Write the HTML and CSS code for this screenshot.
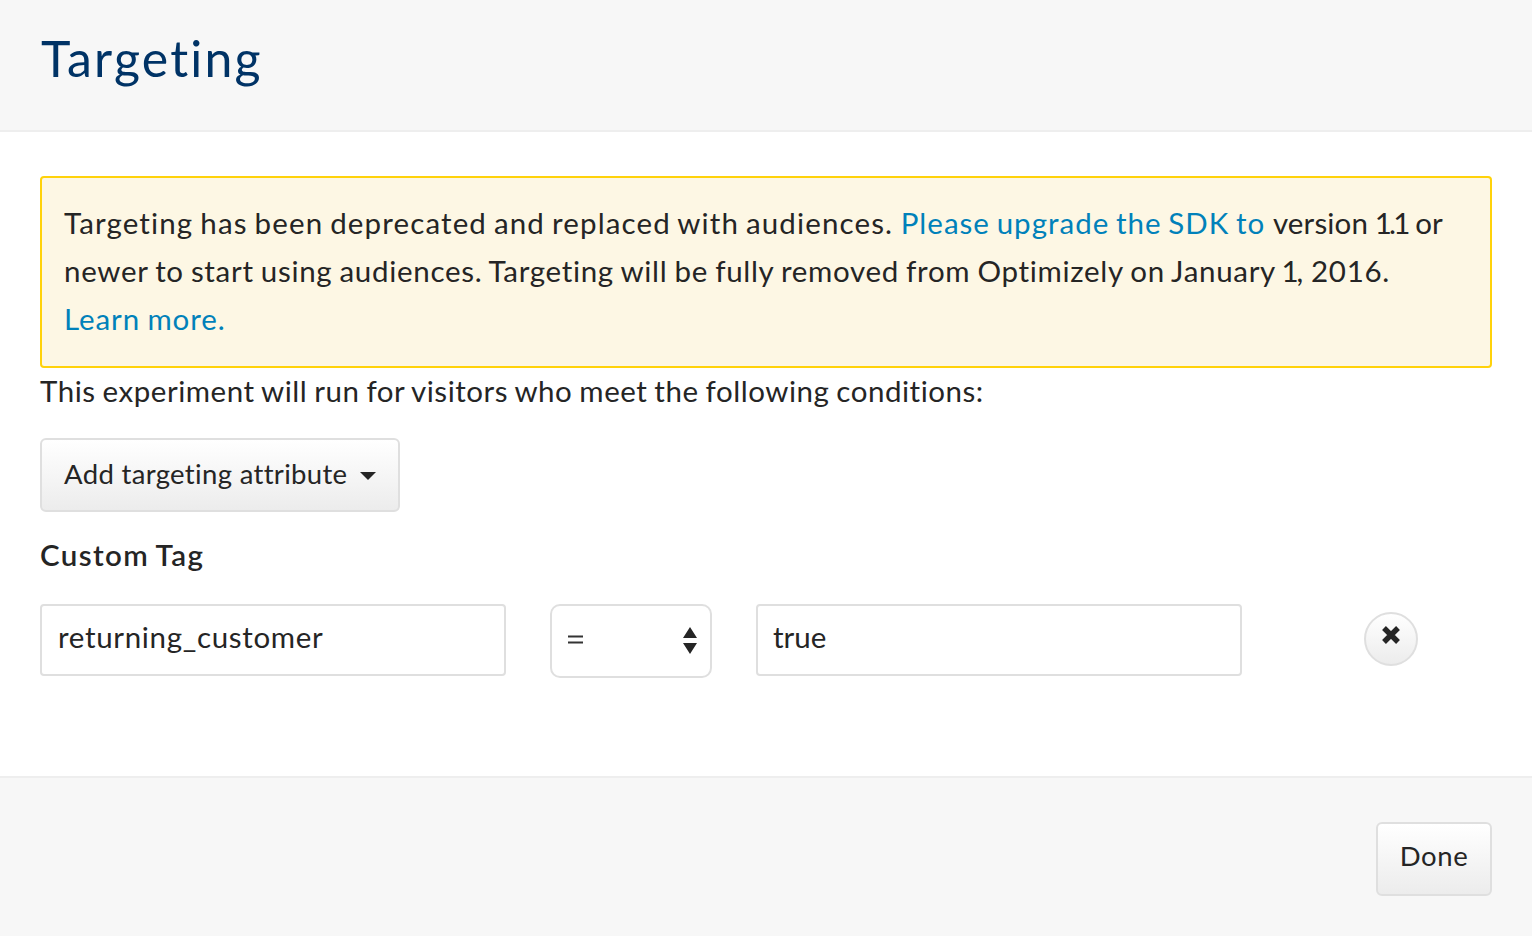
FILE: index.html
```html
<!DOCTYPE html>
<html lang="en">
<head>
<meta charset="utf-8">
<title>Targeting</title>
<link rel="stylesheet" href="styles.css">
</head>
<body>
<div class="dialog">
  <header class="dialog-header"><h1 class="title">Targeting</h1></header>
  <main class="dialog-body">
    <div class="notice">
      <div><span class="notice-lead">Targeting has been deprecated and replaced with audiences.</span> <a class="link link-sdk">Please upgrade the SDK to</a> <span class="notice-version">version <span class="number">1.1</span> or</span></div>
      <div class="notice-detail">newer to start using audiences. Targeting will be fully removed from Optimizely on January <span class="day">1</span>, 2016.</div>
      <div><a class="link link-more">Learn more.</a></div>
    </div>
    <p class="intro">This experiment will run for visitors who meet the following conditions:</p>
    <button class="btn btn-add"><span>Add targeting attribute</span><svg class="caret" width="16" height="8" viewBox="0 0 16 8"><path d="M0 0h16L8 8z" fill="#252525"/></svg></button>
    <h2 class="group-title">Custom Tag</h2>
    <div class="row">
      <div class="field field-name">returning_customer</div>
      <div class="select"><svg width="15" height="10" viewBox="0 0 15 10"><path d="M0 1.5h15M0 7.5h15" stroke="#333" stroke-width="1.8"/></svg><svg width="14" height="27" viewBox="0 0 14 27"><path d="M7 0l7 11H0zM0 16h14L7 27z" fill="#252525"/></svg></div>
      <div class="field field-value">true</div>
      <button class="remove" aria-label="Remove"><svg width="20" height="20" viewBox="0 0 20 20"><path d="M3 3l14 14M17 3L3 17" stroke="#252525" stroke-width="5.4"/></svg></button>
    </div>
  </main>
  <footer class="dialog-footer"><button class="btn btn-done">Done</button></footer>
</div>
</body>
</html>
```

FILE: styles.css
```css
* { box-sizing: border-box; }
body { margin: 0; font-family: Lato, "Liberation Sans", sans-serif; font-size: 29.5px; font-variant-ligatures: none; color: #252525; background: #fff; }
.dialog { display: flex; flex-direction: column; height: 936px; }
.dialog-header { height: 132px; padding: 28px 41px 0; background: #f7f7f7; border-bottom: 2px solid #eee; }
.title { margin: 0; font-size: 50px; line-height: 60px; font-weight: 400; letter-spacing: 2.2px; color: #036; }
.dialog-body { flex: 1; padding: 44px 40px 0; }
.notice { height: 192px; padding: 21px 22px 0; line-height: 48px; white-space: nowrap; background: #fdf7e4; border: 2px solid #ffd20a; border-radius: 4px; }
.notice-lead { letter-spacing: 1.13px; word-spacing: -1.7px; }
.notice-version { letter-spacing: 0.15px; }
.number { letter-spacing: -2.8px; margin-left: -1px; }
.notice-detail { letter-spacing: 0.69px; word-spacing: -1.1px; }
.day { letter-spacing: -2px; margin-left: -1px; }
.link { color: #0081ba; }
.link-sdk { letter-spacing: 1px; word-spacing: -1.8px; }
.link-more { letter-spacing: 0.9px; word-spacing: -1px; }
.intro { margin: 0; height: 70px; line-height: 46px; letter-spacing: 0.53px; word-spacing: -1.1px; white-space: nowrap; }
.btn { display: flex; align-items: center; height: 74px; padding: 0 22px 3px; font: inherit; font-size: 27.5px; color: inherit; white-space: nowrap; border: 2px solid #dfdfdf; border-radius: 6px; background: linear-gradient(#fff, #ececec); }
.btn-add { width: 360px; justify-content: space-between; letter-spacing: 0.33px; }
.caret { margin-top: 4px; }
.group-title { margin: 19px 0 25px; font-size: 29.5px; line-height: 48px; font-weight: 600; letter-spacing: 1.4px; word-spacing: -1.5px; }
.row { display: flex; align-items: flex-start; }
.field { height: 72px; padding: 0 15px; line-height: 62px; border: 2px solid #dfdfdf; border-radius: 4px; }
.field-name { width: 466px; padding-left: 16px; letter-spacing: 0.67px; }
.select { display: flex; align-items: center; justify-content: space-between; width: 162px; height: 74px; margin: 0 44px; padding: 0 13px 2px 16px; border: 2px solid #dfdfdf; border-radius: 10px; }
.field-value { width: 486px; }
.remove { display: flex; align-items: flex-start; justify-content: center; width: 54px; height: 54px; margin: 8px 0 0 122px; padding: 11px 0 0; border: 2px solid #dfdfdf; border-radius: 50%; background: linear-gradient(#fff, #ececec); }
.dialog-footer { display: flex; justify-content: flex-end; height: 160px; padding: 44px 40px 0; background: #f7f7f7; border-top: 2px solid #eee; }
.btn-done { width: 116px; justify-content: center; padding-bottom: 7px; letter-spacing: 0.6px; }
```
